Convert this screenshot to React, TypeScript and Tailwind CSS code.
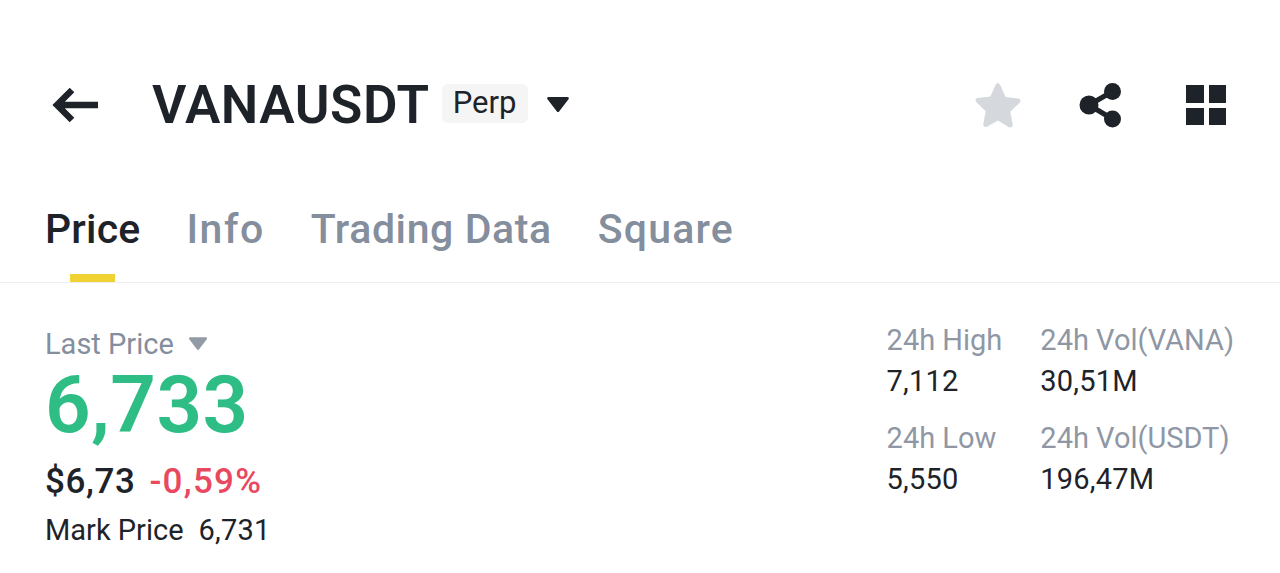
const Caret = ({ className }: { className: string }) => (
  <svg viewBox="0 0 24 16" className={className} fill="currentColor">
    <path d="M2.500 0h19c1.200 0 1.800 1.300 1 2.200l-9.400 12.300c-.6.7-1.600.7-2.200 0L1.500 2.200C.7 1.300 1.300 0 2.500 0z" />
  </svg>
);

const Stat = ({ label, value }: { label: string; value: string }) => (
  <div>
    <div className="text-[29px] leading-[34px] text-[#8f97a5]">{label}</div>
    <div className="mt-[7px] text-[29px] leading-[34px] tracking-[0.2px] text-[#1e2329]">{value}</div>
  </div>
);

const tabs = [
  { label: 'Price', className: 'tracking-[0.2px] text-[#1e2329]' },
  { label: 'Info', className: 'tracking-[1.500px] text-[#848e9c]' },
  { label: 'Trading Data', className: 'tracking-[0.6px] text-[#848e9c]' },
  { label: 'Square', className: 'tracking-[1.200px] text-[#848e9c]' },
];

const App = () => {
  return (
    <div className="h-[573px] w-[1280px] overflow-hidden bg-white pt-[63px] font-['Roboto',sans-serif] text-[#1e2329]">
      <header className="flex h-[84px] items-center justify-between pl-[52px] pr-[54px]">
        <div className="flex items-center">
          <svg viewBox="0 0 46 36" className="h-[36px] w-[46px]" fill="none" stroke="#1e2329" strokeWidth="6.500">
            <path d="M20 3 5 18l15 15M5 18h41" />
          </svg>
          <h1 className="ml-[54px] text-[53px] font-semibold leading-none tracking-[0.5px]">VANAUSDT</h1>
          <span className="mb-[4px] ml-[12px] flex h-[39px] w-[86px] items-center justify-center rounded-[6px] bg-[#f5f5f5] text-[31px]">Perp</span>
          <Caret className="ml-[18px] h-[16px] w-[24px]" />
        </div>
        <div className="flex items-center">
          <svg viewBox="0 0 46 46" className="h-[46px] w-[46px]" fill="#d5d8dc">
            <path d="M23 1.500c1 0 1.700.6 2.200 1.600l5.400 11.800 12.600 1.600c2.200.3 3 2.800 1.400 4.300l-9.300 8.900 2.400 12.800c.4 2.200-1.800 3.800-3.700 2.700L23 38.500l-11 6.200c-1.900 1.100-4.100-.5-3.700-2.700l2.400-12.800-9.300-8.900c-1.600-1.500-.8-4 1.400-4.300l12.600-1.600 5.400-11.800c.5-1 1.200-1.600 2.200-1.600z" />
          </svg>
          <svg viewBox="0 0 44 46" className="ml-[58px] h-[46px] w-[44px]" fill="#1e2329" stroke="#1e2329">
            <circle cx="10" cy="23" r="9.500" stroke="none" />
            <circle cx="33.500" cy="9.500" r="8.500" stroke="none" />
            <circle cx="33.500" cy="37" r="8.500" stroke="none" />
            <path d="M10 23 33.500 9.500M10 23l23.500 14" strokeWidth="5" />
          </svg>
          <div className="ml-[63px] grid h-[40px] w-[40px] grid-cols-2 gap-[5px]">
            <div className="bg-[#1e2329]" />
            <div className="bg-[#1e2329]" />
            <div className="bg-[#1e2329]" />
            <div className="bg-[#1e2329]" />
          </div>
        </div>
      </header>

      <nav className="mt-[36px] flex h-[100px] gap-[46px] border-b border-[#eaecef] pl-[45px] text-[41px] font-medium leading-[50px]">
        {tabs.map((tab, i) => (
          <div key={tab.label} className={`flex flex-col items-center ${tab.className}`}>
            <span className="mt-[21px]">{tab.label}</span>
            {i === 0 && <span className="mt-[20px] h-[8px] w-[45px] bg-[#f0d232]" />}
          </div>
        ))}
      </nav>

      <section className="flex justify-between pl-[45px] pr-[46px] pt-[40px]">
        <div className="pt-[3px]">
          <div className="flex items-center text-[29px] leading-[36px] text-[#848e9c]">
            Last Price
            <Caret className="ml-[14px] h-[14px] w-[20px] text-[#929aa5]" />
          </div>
          <div className="mt-[7px] text-[80px] font-semibold leading-[72px] tracking-[0.4px] text-[#2ebd85]">6,733</div>
          <div className="mt-[21px] flex items-baseline gap-[14px] text-[35px] font-medium leading-[40px] tracking-[0.6px]">
            <span>$6,73</span>
            <span className="tracking-[1.300px] text-[#e8495f]">-0,59%</span>
          </div>
          <div className="mt-[10px] flex gap-[15px] text-[29px] leading-[36px]">
            <span>Mark Price</span>
            <span className="tracking-[0.2px]">6,731</span>
          </div>
        </div>
        <div className="flex gap-[38px]">
          <div className="flex flex-col gap-[23px]">
            <Stat label="24h High" value="7,112" />
            <Stat label="24h Low" value="5,550" />
          </div>
          <div className="flex flex-col gap-[23px]">
            <Stat label="24h Vol(VANA)" value="30,51M" />
            <Stat label="24h Vol(USDT)" value="196,47M" />
          </div>
        </div>
      </section>
    </div>
  );
};

export default App;
